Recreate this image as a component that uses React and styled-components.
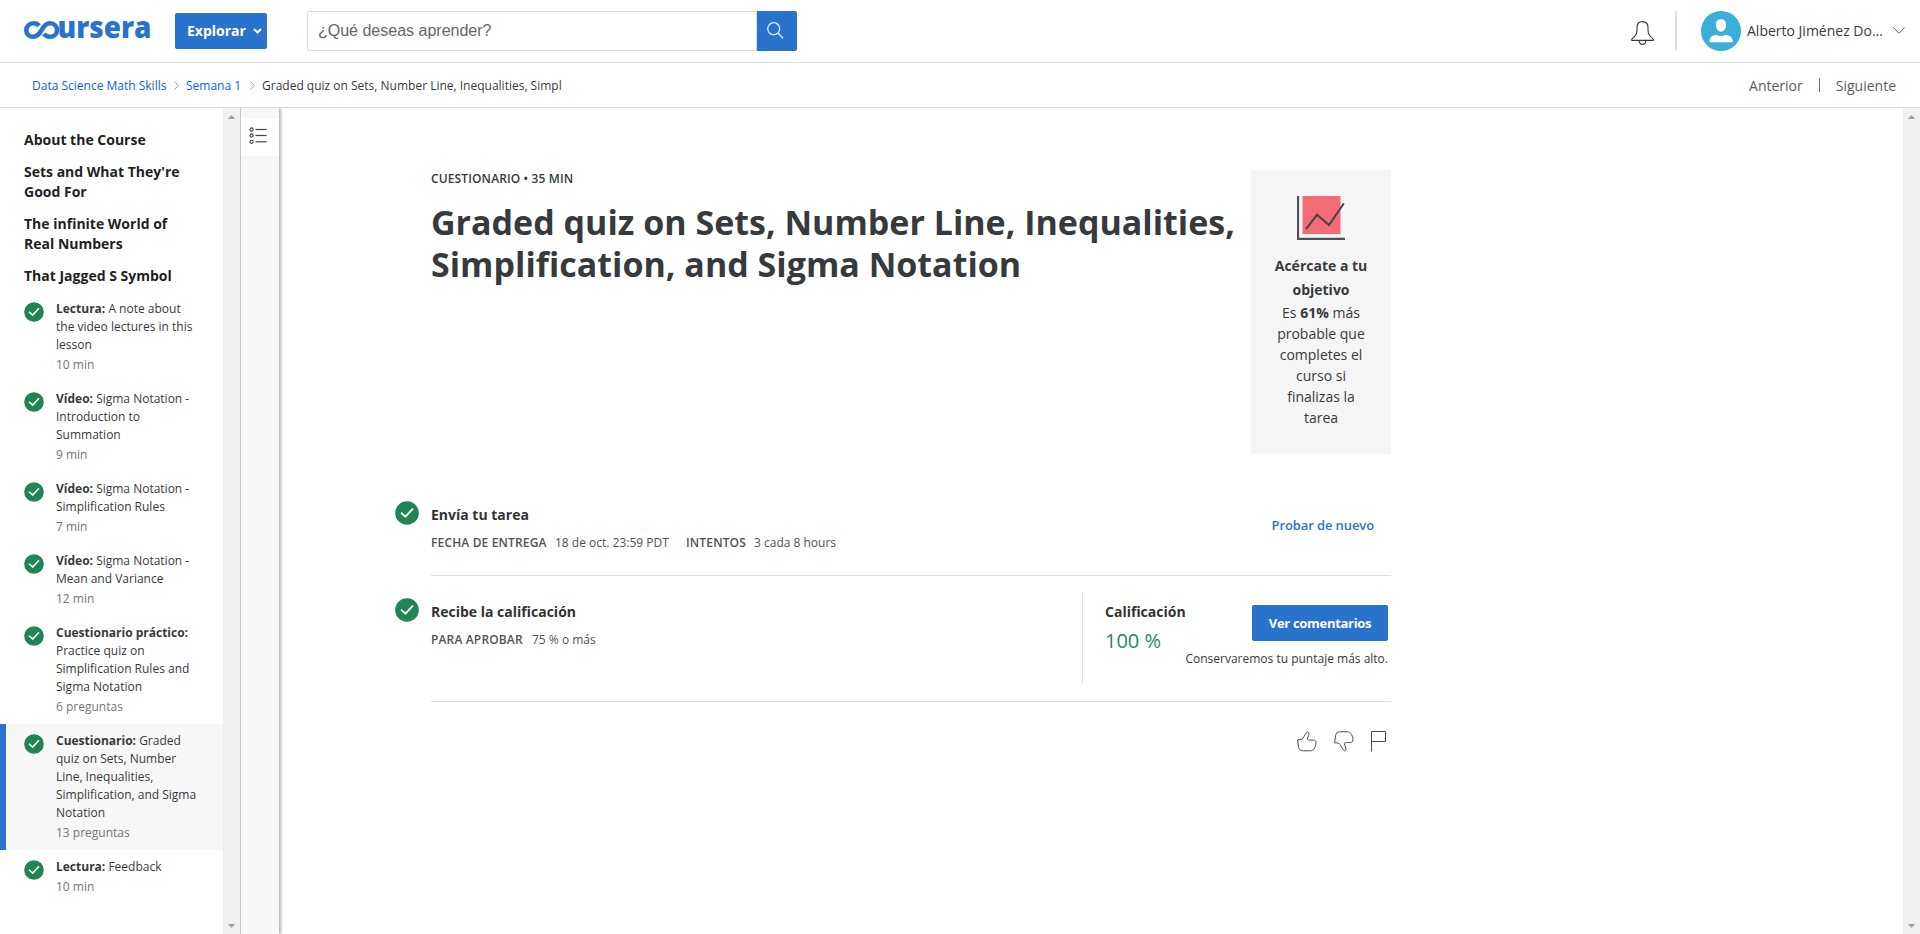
import React from "react";
import styled, { createGlobalStyle, css } from "styled-components";

const GlobalStyle = createGlobalStyle`
  *, *::before, *::after { box-sizing: border-box; }
  html, body, #root { height: 100%; }
  body {
    margin: 0;
    overflow: hidden;
    background: #fff;
    color: #373a3c;
    font-family: "Open Sans", "Noto Sans", sans-serif;
    font-size: 14px;
  }
  h1, h2, h3, p, ul { margin: 0; padding: 0; font-weight: inherit; font-size: inherit; }
  a { color: inherit; text-decoration: none; }
  button { font-family: inherit; border: 0; padding: 0; background: none; color: inherit; }
  svg { display: block; flex: none; }
`;

const Page = styled.div`
  display: flex;
  flex-direction: column;
  height: 934px;
  white-space: nowrap;
`;

const Header = styled.header`
  display: flex;
  align-items: center;
  flex: none;
  height: 63px;
  padding: 0 15px 1px 24px;
  border-bottom: 1px solid #dcdcdc;
`;

const LogoLink = styled.a`
  display: block;
  width: 151px;
  height: 60px;
`;

const LogoText = styled.text`
  font-family: "Open Sans", sans-serif;
  font-weight: 800;
  font-size: 30px;
  fill: #2a73cc;
`;

const ExploreButton = styled.button`
  display: flex;
  align-items: center;
  gap: 7px;
  width: 92px;
  height: 36px;
  padding-left: 12px;
  border-radius: 2px;
  background: #2a73cc;
  color: #fff;
  font-size: 14px;
  font-weight: 700;
`;

const SearchForm = styled.div`
  display: flex;
  width: 490px;
  height: 40px;
  margin-left: 40px;
`;

const SearchField = styled.div`
  display: flex;
  align-items: center;
  flex: 1;
  padding: 0 0 0 10px;
  border: 1px solid #dcdcdc;
  border-radius: 2px 0 0 2px;
  color: #666;
  font-family: "Liberation Sans", Arial, sans-serif;
  font-size: 16px;
`;

const SearchButton = styled.button`
  display: flex;
  align-items: center;
  width: 40px;
  padding-left: 10px;
  border-radius: 0 2px 2px 0;
  background: #2a73cc;
`;

const Account = styled.div`
  display: flex;
  align-items: center;
  margin-left: auto;
`;

const AccountDivider = styled.span`
  width: 2px;
  height: 40px;
  margin: 0 24px 0 21px;
  background: #dedede;
`;

const UserName = styled.span`
  width: 137px;
  margin: 0 9px 0 6px;
  font-size: 14px;
`;

const SubHeader = styled.nav`
  display: flex;
  align-items: center;
  flex: none;
  height: 45px;
  padding: 0 24px 0 32px;
  border-bottom: 1px solid #dcdcdc;
`;

const Crumb = styled.a`
  width: ${(p) => p.$width}px;
  padding-top: 2px;
  color: ${(p) => (p.$current ? "#373a3c" : "#0b62e4")};
  font-size: 12px;
  line-height: 18px;
`;

const CrumbSeparator = styled.span`
  display: flex;
  justify-content: center;
  width: 20px;
  padding-top: 1px;
`;

const Pager = styled.div`
  display: flex;
  align-items: center;
  gap: 16px;
  margin-left: auto;
  color: #5c5c5c;
  font-size: 14px;
`;

const PagerRule = styled.span`
  width: 1px;
  height: 14px;
  background: #757575;
`;

const Body = styled.div`
  display: flex;
  flex: 1;
  min-height: 0;
`;

const Sidebar = styled.aside`
  flex: none;
  width: 223px;
  padding-top: 16px;
`;

const ModuleTitle = styled.h3`
  padding: 6px 24px;
  color: #1f1f1f;
  font-size: 14px;
  font-weight: 700;
  line-height: 20px;
`;

const Lesson = styled.a`
  display: flex;
  padding: 8px 0 8px 18px;
  border-left: 6px solid transparent;
  ${(p) =>
    p.$active &&
    css`
      border-left-color: #2a73cc;
      background: #f7f7f7;
    `}
`;

const LessonIcon = styled.span`
  width: 32px;
  padding-top: 2px;
`;

const LessonText = styled.div`
  color: #373a3c;
  font-size: 12px;
  line-height: 18px;
  strong { font-weight: 700; }
`;

const LessonMeta = styled.p`
  margin-top: 2px;
  color: #757575;
`;

const ScrollTrack = styled.div`
  display: flex;
  flex-direction: column;
  justify-content: space-between;
  align-items: center;
  flex: none;
  width: 17px;
  padding: 7px 0 6px;
  background: #f0f0f0;
`;

const ToolStrip = styled.div`
  position: relative;
  flex: none;
  width: 39px;
  padding-top: 10px;
  border-left: 1px solid #c8c8c8;
  background: #f7f7f7;
  box-shadow: 2px 0 3px rgba(0, 0, 0, 0.3);
  clip-path: inset(0 -8px 0 0);
`;

const ToolButton = styled.button`
  display: flex;
  justify-content: center;
  align-items: center;
  width: 38px;
  height: 38px;
  padding: 0 4px 2px 0;
  background: #fff;
`;

const Main = styled.main`
  flex: 1;
  padding: 62px 0 0 116px;
`;

const Content = styled.div`
  display: flex;
  flex-direction: column;
  width: 996px;
`;

const Intro = styled.section`
  display: flex;
  justify-content: space-between;
  height: 284px;
  margin-left: 36px;
`;

const Eyebrow = styled.p`
  font-size: 12px;
  font-weight: 600;
  line-height: 18px;
  letter-spacing: 0.13px;
`;

const Title = styled.h1`
  margin-top: 13px;
  font-size: 34px;
  font-weight: 700;
  line-height: 42px;
`;

const GoalCard = styled.aside`
  display: flex;
  flex-direction: column;
  align-items: center;
  width: 140px;
  padding-top: 26px;
  background: #f5f5f5;
  text-align: center;
`;

const GoalTitle = styled.h2`
  margin-top: 14px;
  font-size: 14px;
  font-weight: 700;
  line-height: 24px;
`;

const GoalText = styled.p`
  font-size: 14px;
  line-height: 21px;
  strong { font-weight: 700; }
`;

const Step = styled.section`
  display: flex;
  height: ${(p) => p.$height}px;
  margin-top: ${(p) => p.$top || 0}px;
`;

const StepIcon = styled.span`
  width: 36px;
  padding-top: 22px;
`;

const StepBody = styled.div`
  display: flex;
  flex: 1;
  border-bottom: 1px solid #dedede;
`;

const StepInfo = styled.div`
  flex: 1;
  padding-top: 24px;
`;

const StepTitle = styled.h2`
  color: #333;
  font-size: 14px;
  font-weight: 700;
  line-height: 24px;
`;

const Facts = styled.p`
  display: flex;
  margin-top: 7px;
  color: #525252;
  font-size: 12px;
  line-height: 18px;
`;

const FactLabel = styled.strong`
  width: ${(p) => p.$width}px;
  font-weight: 600;
  letter-spacing: 0.15px;
`;

const FactValue = styled.span`
  width: ${(p) => p.$width}px;
`;

const RetryLink = styled.a`
  padding: 37px 17px 0 0;
  color: #2a73cc;
  font-size: 13px;
  font-weight: 600;
  line-height: 18px;
  letter-spacing: -0.1px;
`;

const GradePanel = styled.div`
  display: flex;
  width: 309px;
  height: 90px;
  margin-top: 17px;
  padding: 7px 3px 0 22px;
  border-left: 1px solid #dedede;
`;

const Grade = styled.p`
  margin-top: 2px;
  color: #2f8361;
  font-size: 20px;
  line-height: 30px;
`;

const GradeActions = styled.div`
  display: flex;
  flex-direction: column;
  align-items: flex-end;
  flex: 1;
  width: 0;
  padding-top: 5px;
`;

const PrimaryButton = styled.button`
  width: 136px;
  height: 36px;
  border-radius: 2px;
  background: #2a73cc;
  color: #fff;
  font-size: 13px;
  font-weight: 700;
  letter-spacing: -0.3px;
`;

const GradeNote = styled.p`
  margin-top: 9px;
  font-size: 12px;
  line-height: 18px;
`;

const Feedback = styled.div`
  display: flex;
  justify-content: flex-end;
  gap: 17px;
  padding: 29px 4px 0 0;
`;

function Logo() {
  return (
    <svg width="140" height="60" viewBox="0 -15 140 60">
      <path
        d="M15.2 9.8C13.8 8.1 11.8 7.3 9.6 7.3C5.3 7.3 2.3 10.3 2.3 14.2C2.3 18 5.3 20.8 9.3 20.8C13.2 20.8 15.2 18.5 17.6 14.2C19.9 9.8 22.1 7.3 26 7.3C30 7.3 33 10.3 33 14.2C33 18 30 20.8 26 20.8C23.3 20.8 21.3 19.8 19.9 17.7"
        fill="none"
        stroke="#2a73cc"
        strokeWidth="4.6"
      />
      <LogoText x="33.5" y="22.2" textLength="94" lengthAdjust="spacingAndGlyphs">ursera</LogoText>
    </svg>
  );
}

function Check({ size }) {
  return (
    <svg width={size} height={size} viewBox="0 0 24 24">
      <circle cx="12" cy="12" r="11.8" fill="#208454" />
      <path d="M6 11.7L10.4 15.7L18 7.6" fill="none" stroke="#fff" strokeWidth="1.8" />
    </svg>
  );
}

function Chevron({ width, height, color, weight = 1, right }) {
  return (
    <svg width={width} height={height} viewBox={`0 0 ${width} ${height}`}>
      <path
        d={
          right
            ? `M0.5 0.5L${width - 0.7} ${height / 2}L0.5 ${height - 0.5}`
            : `M${weight / 2} ${weight / 2}L${width / 2} ${height - weight * 0.75}L${width - weight / 2} ${weight / 2}`
        }
        fill="none"
        stroke={color}
        strokeWidth={weight}
      />
    </svg>
  );
}

function Arrow({ down }) {
  return (
    <svg width="7" height="4" viewBox="0 0 7 4">
      <path d={down ? "M0 0H7L3.5 4Z" : "M0 4H7L3.5 0Z"} fill="#a3a3a3" />
    </svg>
  );
}

function Scrollbar() {
  return (
    <ScrollTrack>
      <Arrow />
      <Arrow down />
    </ScrollTrack>
  );
}

function SearchIcon() {
  return (
    <svg width="17" height="17" viewBox="0 0 17 17" fill="none" stroke="#fff" strokeOpacity="0.85">
      <circle cx="6.7" cy="6.7" r="6" strokeWidth="1.3" />
      <path d="M11 11L16 16.2" strokeWidth="1.4" />
    </svg>
  );
}

function Bell() {
  return (
    <svg width="23" height="28" viewBox="0 -4 23 28" fill="none" stroke="#373a3c" strokeWidth="1.1">
      <path d="M0.8 19.4V18.1C4.6 15.2 6 12.6 6 9.2V6.4C6 2.6 8 0.6 11.5 0.6S17 2.6 17 6.4V9.2C17 12.6 18.4 15.2 22.2 18.1V19.4Z" />
      <path d="M8.2 19.8C8.2 22.2 9.6 23.4 11.5 23.4S14.8 22.2 14.8 19.8" />
    </svg>
  );
}

function Avatar() {
  return (
    <svg width="40" height="40" viewBox="0 0 40 40">
      <circle cx="20" cy="20" r="20" fill="#3bafda" />
      <path d="M20 8.2C23.3 8.2 25.3 10.2 25.1 13.8C24.9 17.8 23 20.8 20 20.8S15.1 17.8 14.9 13.8C14.7 10.2 16.7 8.2 20 8.2Z" fill="#fff" />
      <path d="M8.6 31.3C8.3 25.8 11 24.6 15.3 23.7Q20 26.2 24.7 23.7C29 24.6 32 25.8 31.7 31.3Z" fill="#fff" />
    </svg>
  );
}

function OutlineIcon() {
  return (
    <svg width="18" height="18" viewBox="0 0 18 18" fill="none" stroke="#444">
      {[2.5, 8.5, 14.8].map((y) => (
        <g key={y}>
          <circle cx="2.6" cy={y} r="1.6" strokeWidth="1.1" />
          <path d={`M6.5 ${y}H17.5`} strokeWidth="1.2" />
        </g>
      ))}
    </svg>
  );
}

function ChartIcon() {
  return (
    <svg width="48" height="44" viewBox="0 0 48 44" fill="none">
      <rect x="5.5" width="38" height="38" fill="#f36c75" />
      <path d="M1 0V42.8H48" stroke="#505050" strokeWidth="2.2" />
      <path d="M9 33.2L20 18.8L32 29L46.8 7.5" stroke="#464646" strokeWidth="2.1" />
    </svg>
  );
}

const thumbPath =
  "M0.6 8.8C2.4 8.9 4 8.7 5 8.1C6.6 6.8 7.6 4.4 9 2.2C9.6 1 10.4 0.5 11.2 0.9C12.3 1.5 12 3 11.5 4.6L10.2 8.1C10.8 9 12 9.1 13.4 9.1H16.4C18.2 9.2 19.2 10.2 18.9 11.7C19 14 18.1 16.7 16.5 18.4C15.6 19.4 14.6 19.8 13.2 19.8H6.5C3.5 19.8 2.2 18.6 1.6 16.2Z";

function Thumb({ down }) {
  return (
    <svg width="20" height="21" viewBox="0 0 20 21" fill="none" stroke="#4a4c50" strokeWidth="1">
      <path d={thumbPath} transform={down ? "translate(0 20.6) scale(1 -1)" : undefined} />
    </svg>
  );
}

function Flag() {
  return (
    <svg width="16" height="21" viewBox="0 0 16 21" fill="none" stroke="#4a4c50">
      <path d="M0.5 20.5V0.5H14.5V10.5H0.5" />
    </svg>
  );
}

const modules = [
  ["About the Course"],
  ["Sets and What They're", "Good For"],
  ["The infinite World of", "Real Numbers"],
  ["That Jagged S Symbol"],
];

const lessons = [
  { type: "Lectura:", lines: ["A note about", "the video lectures in this", "lesson"], meta: "10 min" },
  { type: "Vídeo:", lines: ["Sigma Notation -", "Introduction to", "Summation"], meta: "9 min" },
  { type: "Vídeo:", lines: ["Sigma Notation -", "Simplification Rules"], meta: "7 min" },
  { type: "Vídeo:", lines: ["Sigma Notation -", "Mean and Variance"], meta: "12 min" },
  {
    type: "Cuestionario práctico:",
    lines: ["", "Practice quiz on", "Simplification Rules and", "Sigma Notation"],
    meta: "6 preguntas",
  },
  {
    type: "Cuestionario:",
    lines: ["Graded", "quiz on Sets, Number", "Line, Inequalities,", "Simplification, and Sigma", "Notation"],
    meta: "13 preguntas",
    active: true,
  },
  { type: "Lectura:", lines: ["Feedback"], meta: "10 min" },
];

function Lines({ items }) {
  return items.map((line, i) => (
    <React.Fragment key={i}>
      {i > 0 && <br />}
      {line}
    </React.Fragment>
  ));
}

export default function App() {
  return (
    <Page>
      <GlobalStyle />
      <Header>
        <LogoLink aria-label="coursera">
          <Logo />
        </LogoLink>
        <ExploreButton>
          Explorar
          <Chevron width={9} height={6} color="#fff" weight={2} />
        </ExploreButton>
        <SearchForm>
          <SearchField>¿Qué deseas aprender?</SearchField>
          <SearchButton aria-label="Buscar">
            <SearchIcon />
          </SearchButton>
        </SearchForm>
        <Account>
          <Bell />
          <AccountDivider />
          <Avatar />
          <UserName>Alberto Jiménez Do...</UserName>
          <Chevron width={12} height={7} color="#666" />
        </Account>
      </Header>

      <SubHeader>
        <Crumb $width={134}>Data Science Math Skills</Crumb>
        <CrumbSeparator>
          <Chevron right width={5} height={9} color="#999" />
        </CrumbSeparator>
        <Crumb $width={56}>Semana 1</Crumb>
        <CrumbSeparator>
          <Chevron right width={5} height={9} color="#999" />
        </CrumbSeparator>
        <Crumb as="span" $current $width={300}>
          Graded quiz on Sets, Number Line, Inequalities, Simpl
        </Crumb>
        <Pager>
          <a>Anterior</a>
          <PagerRule />
          <a>Siguiente</a>
        </Pager>
      </SubHeader>

      <Body>
        <Sidebar>
          {modules.map((lines) => (
            <ModuleTitle key={lines[0]}>
              <Lines items={lines} />
            </ModuleTitle>
          ))}
          {lessons.map((lesson, i) => (
            <Lesson key={i} $active={lesson.active}>
              <LessonIcon>
                <Check size={20} />
              </LessonIcon>
              <LessonText>
                <strong>{lesson.type}</strong> <Lines items={lesson.lines} />
                <LessonMeta>{lesson.meta}</LessonMeta>
              </LessonText>
            </Lesson>
          ))}
        </Sidebar>
        <Scrollbar />
        <ToolStrip>
          <ToolButton aria-label="Contenido">
            <OutlineIcon />
          </ToolButton>
        </ToolStrip>

        <Main>
          <Content>
            <Intro>
              <div>
                <Eyebrow>CUESTIONARIO • 35 MIN</Eyebrow>
                <Title>
                  Graded quiz on Sets, Number Line, Inequalities,
                  <br />
                  Simplification, and Sigma Notation
                </Title>
              </div>
              <GoalCard>
                <ChartIcon />
                <GoalTitle>
                  <Lines items={["Acércate a tu", "objetivo"]} />
                </GoalTitle>
                <GoalText>
                  Es <strong>61%</strong> más
                  <br />
                  <Lines items={["probable que", "completes el", "curso si", "finalizas la", "tarea"]} />
                </GoalText>
              </GoalCard>
            </Intro>

            <Step $height={97} $top={25}>
              <StepIcon>
                <Check size={24} />
              </StepIcon>
              <StepBody>
                <StepInfo>
                  <StepTitle>Envía tu tarea</StepTitle>
                  <Facts>
                    <FactLabel $width={124}>FECHA DE ENTREGA</FactLabel>
                    <FactValue $width={131}>18 de oct. 23:59 PDT</FactValue>
                    <FactLabel $width={68}>INTENTOS</FactLabel>
                    <FactValue>3 cada 8 hours</FactValue>
                  </Facts>
                </StepInfo>
                <RetryLink>Probar de nuevo</RetryLink>
              </StepBody>
            </Step>

            <Step $height={126}>
              <StepIcon>
                <Check size={24} />
              </StepIcon>
              <StepBody>
                <StepInfo>
                  <StepTitle>Recibe la calificación</StepTitle>
                  <Facts>
                    <FactLabel $width={101}>PARA APROBAR</FactLabel>
                    <FactValue>75 % o más</FactValue>
                  </Facts>
                </StepInfo>
                <GradePanel>
                  <div>
                    <StepTitle>Calificación</StepTitle>
                    <Grade>100 %</Grade>
                  </div>
                  <GradeActions>
                    <PrimaryButton>Ver comentarios</PrimaryButton>
                    <GradeNote>Conservaremos tu puntaje más alto.</GradeNote>
                  </GradeActions>
                </GradePanel>
              </StepBody>
            </Step>

            <Feedback>
              <Thumb />
              <Thumb down />
              <Flag />
            </Feedback>
          </Content>
        </Main>
        <Scrollbar />
      </Body>
    </Page>
  );
}
